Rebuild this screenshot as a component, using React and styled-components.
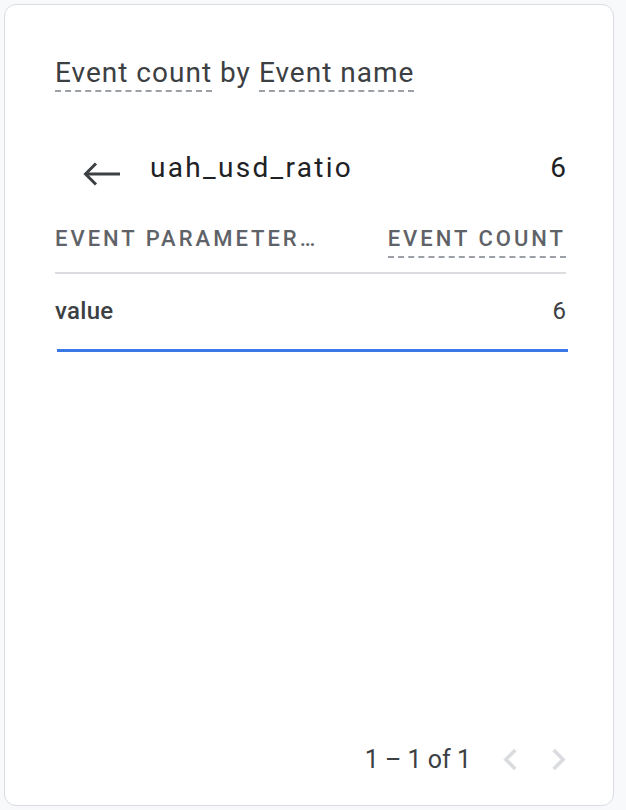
import React from "react";
import styled, { createGlobalStyle } from "styled-components";

const GlobalStyle = createGlobalStyle`
  html, body {
    margin: 0;
    padding: 0;
    background: #f8f9fa;
    font-family: Roboto, "Noto Sans", Arial, sans-serif;
  }
`;

const Page = styled.div`
  width: 626px;
  height: 810px;
  padding: 4px 12px 4px 4px;
  box-sizing: border-box;
`;

const Card = styled.div`
  height: 100%;
  box-sizing: border-box;
  background: #fff;
  border: 1px solid #dadce0;
  border-radius: 12px;
  padding: 51px 47px 24px 50px;
  display: flex;
  flex-direction: column;
`;

const Title = styled.div`
  font-size: 28px;
  line-height: 34px;
  letter-spacing: 1px;
  color: #3c4043;
  display: flex;
  gap: 8px;
`;

const Dotted = styled.span`
  border-bottom: 2px dashed #9aa0a6;
`;

const Plain = styled.span`
  border-bottom: 2px solid transparent;
`;

const DrillRow = styled.div`
  display: flex;
  align-items: center;
  margin-top: 55px;
  height: 40px;
`;

const BackBtn = styled.button`
  border: none;
  background: none;
  padding: 0;
  margin: 14px 0 0 27px;
  width: 40px;
  height: 24px;
  display: flex;
  align-items: center;
  justify-content: center;
  color: #3c4043;
  cursor: pointer;
`;

const DrillName = styled.div`
  margin-left: 28px;
  font-size: 28px;
  letter-spacing: 2.3px;
  color: #202124;
  flex: 1;
`;

const DrillCount = styled.div`
  font-size: 28px;
  color: #202124;
`;

const HeadRow = styled.div`
  display: flex;
  justify-content: space-between;
  align-items: flex-start;
  margin-top: 38px;
  padding-bottom: 14px;
  border-bottom: 2px solid #dadce0;
`;

const HeadCell = styled.div`
  font-size: 22px;
  line-height: 28px;
  letter-spacing: 3px;
  color: #5f6368;
  font-weight: 500;
  ${p => p.$dashed && "border-bottom: 2px dashed #9aa0a6; padding-bottom: 3px;"}
`;

const DataRow = styled.div`
  display: flex;
  justify-content: space-between;
  align-items: center;
  height: 74px;
  font-size: 24px;
  color: #3c4043;
`;

const ParamName = styled.div`
  font-weight: 500;
  letter-spacing: 0.3px;
`;

const Bar = styled.div`
  height: 3px;
  margin-top: 1px;
  background: #3b78e7;
  margin-left: 2px;
  margin-right: -2px;
`;

const Footer = styled.div`
  margin-top: auto;
  margin-right: -14px;
  display: flex;
  justify-content: flex-end;
  align-items: center;
  gap: 18px;
  font-size: 25px;
  color: #3c4043;
`;

const Pager = styled.div`
  display: flex;
  gap: 5px;
`;

const Chevron = styled.svg`
  width: 43px;
  height: 43px;
  color: #dadce0;
`;

function ArrowLeft() {
  return (
    <svg width="40" height="24" viewBox="0 0 40 24" fill="none" stroke="currentColor" strokeWidth="3">
      <path d="M38 12H4" />
      <path d="M14 1.5L3.5 12L14 22.5" />
    </svg>
  );
}

export default function App() {
  return (
    <Page>
      <GlobalStyle />
      <Card>
        <Title>
          <Dotted>Event count</Dotted>
          <Plain>by</Plain>
          <Dotted>Event name</Dotted>
        </Title>
        <DrillRow>
          <BackBtn><ArrowLeft /></BackBtn>
          <DrillName>uah_usd_ratio</DrillName>
          <DrillCount>6</DrillCount>
        </DrillRow>
        <HeadRow>
          <HeadCell>EVENT PARAMETER…</HeadCell>
          <HeadCell $dashed>EVENT COUNT</HeadCell>
        </HeadRow>
        <DataRow>
          <ParamName>value</ParamName>
          <span>6</span>
        </DataRow>
        <Bar />
        <Footer>
          <span>1 – 1 of 1</span>
          <Pager>
            <Chevron viewBox="0 0 24 24" fill="currentColor">
              <path d="M15.41 7.41L14 6l-6 6 6 6 1.41-1.41L10.83 12z" />
            </Chevron>
            <Chevron viewBox="0 0 24 24" fill="currentColor">
              <path d="M10 6L8.59 7.41 13.17 12l-4.58 4.59L10 18l6-6z" />
            </Chevron>
          </Pager>
        </Footer>
      </Card>
    </Page>
  );
}
